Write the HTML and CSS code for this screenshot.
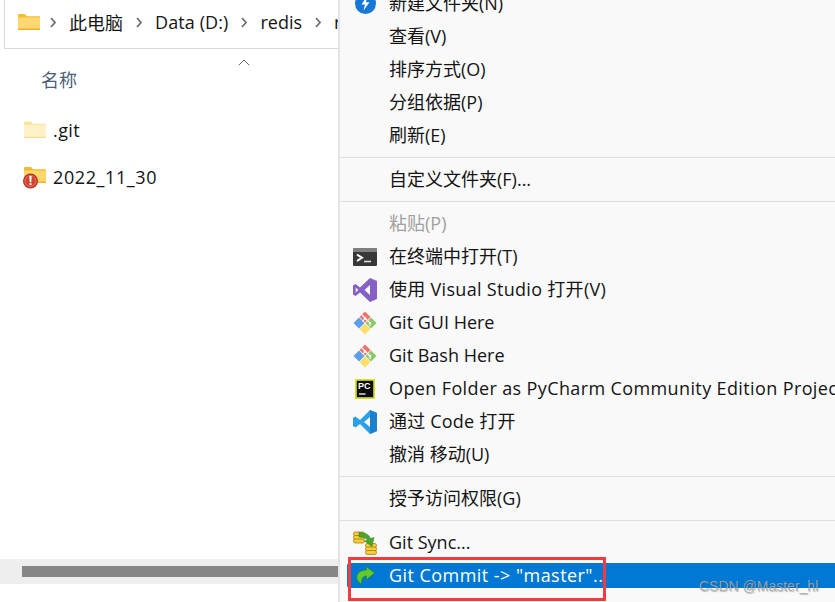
FILE: index.html
```html
<!DOCTYPE html>
<html lang="zh-CN">
<head>
<meta charset="utf-8">
<title>Explorer context menu</title>
<link rel="stylesheet" href="styles.css">
</head>
<body>
<div class="screen">
  <section class="explorer">
    <div class="addressbar">
      <svg class="folder-small" width="22" height="18" viewBox="0 0 22 18"><path d="M0 2a1 1 0 0 1 1-1h6l2 2.200h12.200a.8.8 0 0 1 .8.8V17H0z" fill="#f6bd2e"/><path d="M0 4.500h22V17H0z" fill="#fdd872"/><path d="M0 15.500h22V17H0z" fill="#eeb02a"/></svg>
      <svg class="chev" width="6" height="11" viewBox="0 0 6 11"><path d="m1 1 4 4.500L1 10" fill="none" stroke="#6f6f6f" stroke-width="1.800"/></svg><span>此电脑</span>
      <svg class="chev" width="6" height="11" viewBox="0 0 6 11"><path d="m1 1 4 4.500L1 10" fill="none" stroke="#6f6f6f" stroke-width="1.800"/></svg><span class="crumb-latin">Data (D:)</span>
      <svg class="chev" width="6" height="11" viewBox="0 0 6 11"><path d="m1 1 4 4.500L1 10" fill="none" stroke="#6f6f6f" stroke-width="1.800"/></svg><span>redis</span>
      <svg class="chev" width="6" height="11" viewBox="0 0 6 11"><path d="m1 1 4 4.500L1 10" fill="none" stroke="#6f6f6f" stroke-width="1.800"/></svg><span>r</span>
    </div>
    <div class="sortcaret"><svg width="12" height="7" viewBox="0 0 12 7"><path d="M.8 6.200 6 1l5.200 5.200" fill="none" stroke="#666" stroke-width="1"/></svg></div>
    <div class="colhead">名称</div>
    <div class="file first">
      <svg width="22" height="18" viewBox="0 0 22 18"><path d="M0 1.500a1 1 0 0 1 1-1h6l2 2.200h12.200a.8.8 0 0 1 .8.8V17H0z" fill="#fbe3a0"/><path d="M0 4h22v13H0z" fill="#fff0c6"/><path d="M0 15.800h22V17H0z" fill="#f5dc95"/></svg>
      <span class="name-git">.git</span>
    </div>
    <div class="file second">
      <svg width="23" height="24" viewBox="0 0 23 24"><path d="M1 3a1 1 0 0 1 1-1h6l2 2.200h12.200a.8.8 0 0 1 .8.800V18H1z" fill="#f3b92e"/><path d="M1 5.500h22V18H1z" fill="#fdd76c"/><path d="M1 16.600h22V18H1z" fill="#eeb02a"/><circle cx="7.500" cy="16" r="7.500" fill="#b9301f"/><circle cx="7.500" cy="16" r="5.600" fill="#d8402c" stroke="#e9a9a0" stroke-width=".6"/><path d="M6.300 11h2.400l-.4 6.300H6.700zM6.500 18.200h2v1.900h-2z" fill="#fff"/></svg>
      <span class="name-date">2022_11_30</span>
    </div>
    <div class="hscroll"><div class="hthumb"></div></div>
  </section>

  <nav class="menu">
    <div class="item"><span class="ico"><svg width="21" height="21" viewBox="0 0 24 24"><circle cx="12" cy="12" r="12" fill="#1678d6"/><path d="M13.500 4 7.500 13h3.800l-1.500 7 6.700-9.500h-3.900z" fill="#fff"/></svg></span>新建文件夹(N)</div>
    <div class="item">查看(V)</div>
    <div class="item">排序方式(O)</div>
    <div class="item">分组依据(P)</div>
    <div class="item">刷新(E)</div>
    <div class="sep"></div>
    <div class="item">自定义文件夹(F)...</div>
    <div class="sep"></div>
    <div class="item disabled">粘贴(P)</div>
    <div class="item"><span class="ico"><svg width="24" height="18" viewBox="0 0 24 18"><rect width="24" height="18" rx="1" fill="#383838"/><rect width="24" height="4" fill="#808080"/><path d="m4 6.500 5 3.300L4 13" fill="none" stroke="#fff" stroke-width="2"/><path d="M11 13.500h7" stroke="#ddd" stroke-width="1.600"/></svg></span>在终端中打开(T)</div>
    <div class="item wide-s"><span class="ico"><svg width="24" height="24" viewBox="0 0 24 24"><path fill-rule="evenodd" d="M17 0 24 3v18l-7 3L7 14.500 2.500 18 0 16.500v-9L2.500 6 7 9.500zM17 7l-5.500 5 5.500 5zM2.700 9.500v5L5.300 12z" fill="#8661c5"/></svg></span>使用 Visual Studio 打开(V)</div>
    <div class="item"><span class="ico"><svg width="24" height="24" viewBox="0 0 24 24"><path d="M12 11.500 6.500 6 12 .5 17.500 6z" fill="#f0716d"/><path d="m12.500 12 5.500-5.500 5.500 5.500-5.500 5.500z" fill="#8bc866"/><path d="m12 12.500 5.500 5.500-5.500 5.500L6.500 18z" fill="#fbdf6a"/><path d="M11.500 12 6 17.500.5 12 6 6.500z" fill="#5b9fe8"/><path d="m8 3 9 9v3M12 7.500 9.500 10.500" fill="none" stroke="#fff" stroke-width="1.100"/><circle cx="12" cy="7.500" r="1.300" fill="#fff"/><circle cx="17" cy="12" r="1.300" fill="#fff"/></svg></span>Git GUI Here</div>
    <div class="item"><span class="ico"><svg width="24" height="24" viewBox="0 0 24 24"><path d="M12 11.500 6.500 6 12 .5 17.500 6z" fill="#f0716d"/><path d="m12.500 12 5.500-5.500 5.500 5.500-5.500 5.500z" fill="#8bc866"/><path d="m12 12.500 5.500 5.500-5.500 5.500L6.500 18z" fill="#fbdf6a"/><path d="M11.500 12 6 17.500.5 12 6 6.500z" fill="#5b9fe8"/><path d="m8 3 9 9v3M12 7.500 9.500 10.500" fill="none" stroke="#fff" stroke-width="1.100"/><circle cx="12" cy="7.500" r="1.300" fill="#fff"/><circle cx="17" cy="12" r="1.300" fill="#fff"/></svg></span>Git Bash Here</div>
    <div class="item wide-m"><span class="ico"><svg width="20" height="20" viewBox="0 0 20 20"><rect width="20" height="20" fill="#d8e021"/><rect x="1.800" y="1.800" width="16.400" height="16.400" fill="#0a0a0a"/><path d="M4 15h6.500" stroke="#fff" stroke-width="1.300"/></svg><b class="pc">PC</b></span>Open Folder as PyCharm Community Edition Project</div>
    <div class="item wide-xs"><span class="ico"><svg width="24" height="24" viewBox="0 0 24 24"><path fill-rule="evenodd" d="M17 0 7 10 2.500 6.500 0 8v8l2.500 1.500L7 14l10 10 7-3V3zM17 7v10l-6-5z" fill="#2aa0e8"/><path fill-rule="evenodd" d="M17 0 24 3v18l-7 3z" fill="#1c80cc"/></svg></span>通过 Code 打开</div>
    <div class="item">撤消 移动(U)</div>
    <div class="sep"></div>
    <div class="item">授予访问权限(G)</div>
    <div class="sep"></div>
    <div class="item"><span class="ico"><svg width="24" height="24" viewBox="0 0 24 24"><g fill="#f6cc3c" stroke="#a67f10" stroke-width=".8"><rect x=".5" y="1" width="11" height="4" rx="1.800"/><rect x=".5" y="4.500" width="11" height="4" rx="1.800"/><rect x=".5" y="8" width="11" height="4" rx="1.800"/><rect x="12.500" y="12.500" width="11" height="4" rx="1.800"/><rect x="12.500" y="16" width="11" height="4" rx="1.800"/><rect x="12.500" y="19.500" width="11" height="4" rx="1.800"/></g><path d="M6 1.500c6 0 10 2 11.500 6L21 6.500l-2 9-7.500-5.500 3-1C13.500 7 10.500 6 6 6z" fill="#4aa52e" stroke="#2d7a1a" stroke-width=".5"/></svg></span>Git Sync...</div>
    <div class="item active wide-l"><span class="ico"><svg width="19" height="19" viewBox="0 0 22 22"><path d="M12 .8 21.500 8 12 16v-4.500C8 11.500 6 14.500 6.500 21 1.500 18.500 0 14 1.500 10 3 6.500 7 4.800 12 4.700z" fill="#5fc92f" stroke="#2e8a1c" stroke-width=".9"/></svg></span>Git Commit -&gt; "master"..</div>
    <div class="item">TortoiseGit</div>
  </nav>

  <div class="redbox"></div>
  <div class="watermark">CSDN @Master_hl</div>
</div>
</body>
</html>
```

FILE: styles.css
```css
* { box-sizing: border-box; }
html, body { margin: 0; padding: 0; background: #fff; }
body {
  font-family: "Open Sans", "Noto Sans CJK SC", sans-serif;
  color: #141414;
}
.screen {
  position: relative;
  display: flex;
  width: 835px;
  height: 602px;
  overflow: hidden;
}
.explorer {
  position: relative;
  flex: 0 0 338px;
  min-width: 0;
  height: 602px;
  font-size: 18px;
}
.addressbar {
  display: flex;
  align-items: center;
  height: 49px;
  margin-left: 4px;
  padding: 0 0 5px 13px;
  border-left: 1px solid #d9d9d9;
  border-bottom: 1px solid #d9d9d9;
  white-space: nowrap;
  overflow: hidden;
}
.chev { flex: none; margin: 2px 13px 0 13px; }
.folder-small { flex: none; margin-right: -3px; }
.crumb-latin { letter-spacing: .1px; }
.sortcaret { display: flex; justify-content: center; margin: 10px 0 0 150px; height: 7px; }
.colhead { margin: 1px 0 0 41px; color: #4a6078; font-size: 18px; line-height: 26px; }
.file { display: flex; align-items: center; gap: 7px; margin-left: 24px; height: 26px; }
.file.first { margin-top: 24px; }
.file.second { margin-top: 21px; margin-left: 23px; gap: 7px; }
.name-git { letter-spacing: .4px; }
.name-date { letter-spacing: .6px; }
.hscroll {
  position: absolute;
  left: 0; top: 559px;
  width: 338px; height: 25px;
  padding: 7px 0 0 22px;
  background: #eeeeee;
}
.hthumb { height: 11px; background: #868686; }

.menu {
  flex: 1;
  min-width: 0;
  display: flex;
  flex-direction: column;
  height: 602px;
  padding-left: 7px;
  background: #f9f9f9;
  border-left: 2px solid #e4e4e4;
  font-size: 18px;
  overflow: hidden;
}
.item {
  position: relative;
  flex: none;
  display: flex;
  align-items: center;
  height: 25px;
  margin: 4px 0;
  padding-left: 42px;
  white-space: nowrap;
  line-height: 25px;
}
.item:first-child { margin-top: -9px; }
.wide-xs { letter-spacing: .2px; }
.wide-s { letter-spacing: .3px; }
.wide-m { letter-spacing: .38px; }
.wide-l { letter-spacing: .45px; }
.ico {
  position: absolute;
  left: 6px; top: 0;
  width: 24px; height: 25px;
  display: flex;
  align-items: center;
  justify-content: center;
}
.pc {
  position: absolute;
  left: 5px; top: 5px;
  font: bold 9px/11px "Liberation Sans", sans-serif;
  letter-spacing: 0;
  color: #fff;
}
.disabled { color: #a0a0a0; }
.sep { flex: none; height: 1px; margin: 5px 0 5px -7px; background: #dedede; }
.active { background: #0078d4; color: #fff; border-radius: 3px 0 0 3px; }
.redbox {
  position: absolute;
  left: 348px; top: 557px;
  width: 258px; height: 44px;
  border: 3px solid #f23a3f;
  pointer-events: none;
}
.watermark {
  position: absolute;
  left: 699px; top: 577px;
  font: 14px/18px "Liberation Sans", sans-serif;
  color: rgba(170, 170, 170, .85);
  text-shadow: 1px 1px 1px rgba(60, 60, 60, .35);
}
```
